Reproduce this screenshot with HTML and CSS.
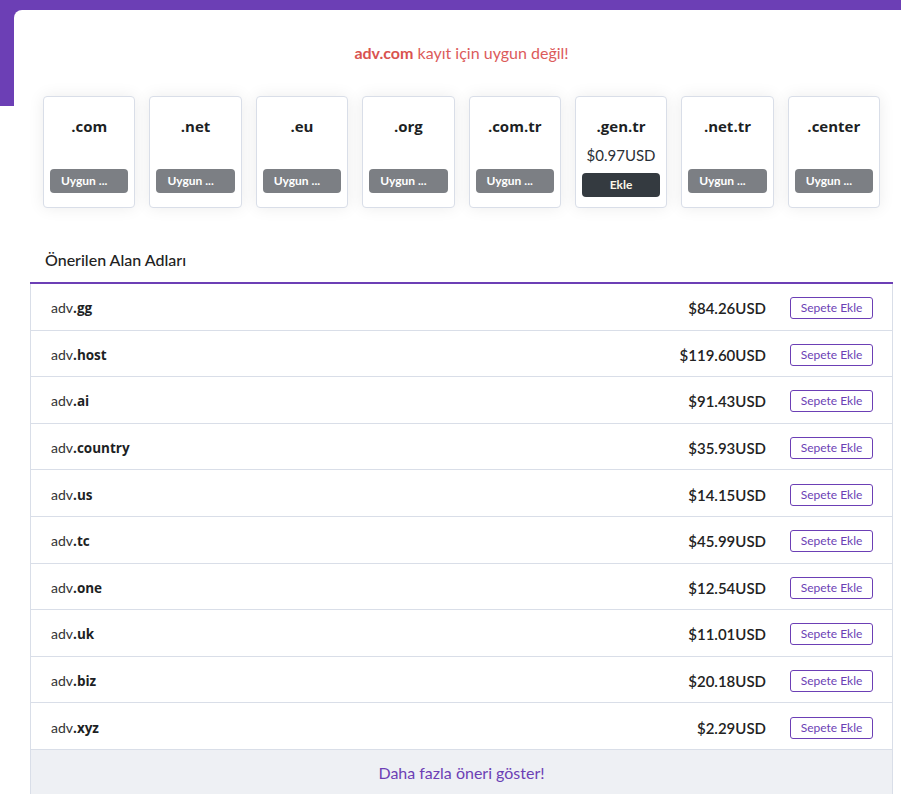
FILE: index.html
```html
<!DOCTYPE html>
<html lang="tr">
<head>
<meta charset="utf-8">
<title>Alan Adı Arama</title>
<link rel="stylesheet" href="styles.css">
</head>
<body>
<div class="page">
  <div class="panel">
    <p class="msg"><strong>adv.com</strong> kayıt için uygun değil!</p>

    <div class="tlds">
      <div class="tld"><div class="tld-name">.com</div><span class="btn-na">Uygun ...</span></div>
      <div class="tld"><div class="tld-name">.net</div><span class="btn-na">Uygun ...</span></div>
      <div class="tld"><div class="tld-name">.eu</div><span class="btn-na">Uygun ...</span></div>
      <div class="tld"><div class="tld-name">.org</div><span class="btn-na">Uygun ...</span></div>
      <div class="tld"><div class="tld-name">.com.tr</div><span class="btn-na">Uygun ...</span></div>
      <div class="tld tld-ok"><div class="tld-name">.gen.tr</div><div class="tld-price">$0.97USD</div><span class="btn-add">Ekle</span></div>
      <div class="tld"><div class="tld-name">.net.tr</div><span class="btn-na">Uygun ...</span></div>
      <div class="tld"><div class="tld-name">.center</div><span class="btn-na">Uygun ...</span></div>
    </div>

    <div class="suggest-title">Önerilen Alan Adları</div>
    <div class="suggest">
      <div class="row"><div class="dom">adv<b>.gg</b></div><div class="price">$84.26USD</div><span class="btn-cart">Sepete Ekle</span></div>
      <div class="row"><div class="dom">adv<b>.host</b></div><div class="price">$119.60USD</div><span class="btn-cart">Sepete Ekle</span></div>
      <div class="row"><div class="dom">adv<b>.ai</b></div><div class="price">$91.43USD</div><span class="btn-cart">Sepete Ekle</span></div>
      <div class="row"><div class="dom">adv<b>.country</b></div><div class="price">$35.93USD</div><span class="btn-cart">Sepete Ekle</span></div>
      <div class="row"><div class="dom">adv<b>.us</b></div><div class="price">$14.15USD</div><span class="btn-cart">Sepete Ekle</span></div>
      <div class="row"><div class="dom">adv<b>.tc</b></div><div class="price">$45.99USD</div><span class="btn-cart">Sepete Ekle</span></div>
      <div class="row"><div class="dom">adv<b>.one</b></div><div class="price">$12.54USD</div><span class="btn-cart">Sepete Ekle</span></div>
      <div class="row"><div class="dom">adv<b>.uk</b></div><div class="price">$11.01USD</div><span class="btn-cart">Sepete Ekle</span></div>
      <div class="row"><div class="dom">adv<b>.biz</b></div><div class="price">$20.18USD</div><span class="btn-cart">Sepete Ekle</span></div>
      <div class="row"><div class="dom">adv<b>.xyz</b></div><div class="price">$2.29USD</div><span class="btn-cart">Sepete Ekle</span></div>
      <div class="more">Daha fazla öneri göster!</div>
    </div>
  </div>
</div>
</body>
</html>
```

FILE: styles.css
```css
* { box-sizing: border-box; }
html, body { margin: 0; padding: 0; }
body {
  font-family: Lato, "Noto Sans", "Liberation Sans", sans-serif;
  color: #222;
  background: #fff;
  overflow: hidden;
}
.page {
  background: linear-gradient(#6c3fb5 0, #6c3fb5 106px, #fff 106px);
  padding: 10px 0 0 14px;
  min-height: 794px;
}
.panel {
  background: #fff;
  border-top-left-radius: 8px;
  padding: 31px 8px 0 16px;
  min-height: 784px;
}
.msg {
  margin: 0;
  text-align: center;
  font-size: 16px;
  line-height: 24px;
  color: #dc5b5b;
}
.msg strong { font-weight: 700; color: #d9534f; }

.tlds {
  display: grid;
  grid-template-columns: repeat(8, 1fr);
  gap: 14px;
  padding: 0 13px;
  margin-top: 31px;
}
.tld {
  height: 112px;
  border: 1px solid #d9dee8;
  border-radius: 4px;
  background: #fff;
  box-shadow: 0 0 16px rgba(0, 0, 0, 0.08);
  display: flex;
  flex-direction: column;
  align-items: stretch;
  padding: 19px 6px 14px;
  text-align: center;
}
.tld-ok { padding-bottom: 10px; }
.tld-name {
  font-family: "Open Sans", Lato, sans-serif;
  font-size: 15px;
  font-weight: 700;
  line-height: 20px;
  color: #1d1f24;
}
.tld-price {
  margin-top: 9px;
  font-size: 15px;
  line-height: 20px;
  color: #2a2f36;
}
.btn-na, .btn-add {
  display: block;
  margin-top: auto;
  height: 24px;
  line-height: 24px;
  border-radius: 4px;
  font-size: 12px;
  font-weight: 700;
  color: #fff;
}
.btn-na {
  background: #7c7f84;
  text-align: left;
  padding-left: 11px;
  white-space: nowrap;
  overflow: hidden;
}
.btn-add {
  background: #343a40;
  color: #fbf6e8;
}

.suggest-title {
  margin-top: 30px;
  padding: 12px 15px;
  font-size: 16px;
  line-height: 20px;
  font-weight: 500;
  color: #222;
  border-bottom: 2px solid #6c3fb5;
}
.suggest {
  border-left: 1px solid #d9dee8;
  border-right: 1px solid #d9dee8;
}
.row {
  height: 46.6px;
  display: flex;
  align-items: center;
  padding: 3px 19px 0 20px;
  border-bottom: 1px solid #d9dee8;
}
.dom {
  flex: 1;
  font-size: 14px;
  color: #333;
}
.dom b {
  font-family: "Open Sans", Lato, sans-serif;
  font-size: 13.5px;
  font-weight: 700;
  color: #1d1f24;
}
.price {
  font-size: 15px;
  font-weight: 600;
  color: #222;
  margin-right: 24px;
}
.btn-cart {
  width: 83px;
  height: 22px;
  line-height: 20px;
  border: 1px solid #6c3fb5;
  border-radius: 3px;
  text-align: center;
  font-size: 12px;
  color: #6c3fb5;
  background: #fff;
}
.more {
  height: 46px;
  line-height: 46px;
  text-align: center;
  background: #eef0f4;
  font-size: 16px;
  color: #6c3fb5;
}
```
